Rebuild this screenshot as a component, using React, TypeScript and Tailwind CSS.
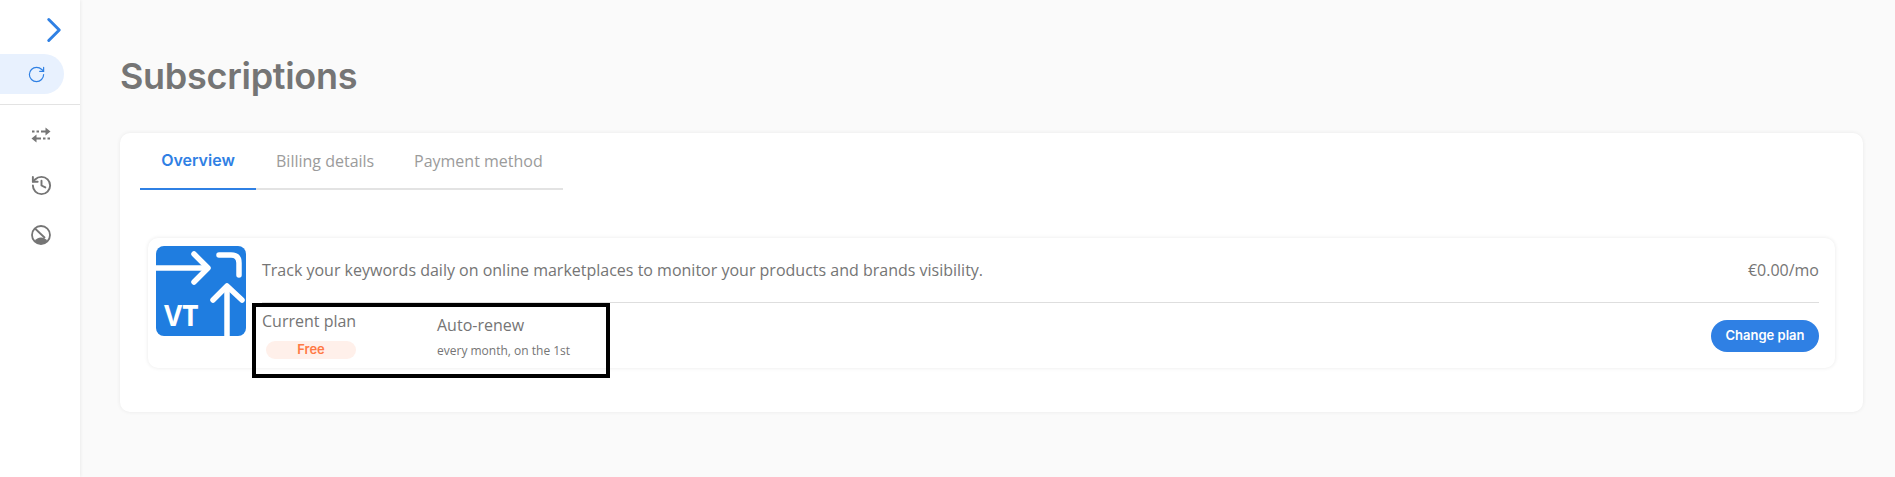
import { ChevronRight, RotateCw, History } from 'lucide-react';

function SwapIcon() {
  return (
    <svg width="20" height="16" viewBox="0 0 20 16" fill="none" className="text-[#757575]">
      <path d="M1 4.500h2.500M5.500 4.500H8M10 4.500h5" stroke="currentColor" strokeWidth="1.800" />
      <path d="M14.500 0.500l5 4-5 4z" fill="currentColor" />
      <path d="M19 11.500h-2.500M14.500 11.500H12M10 11.500H5" stroke="currentColor" strokeWidth="1.800" />
      <path d="M5.500 7.500l-5 4 5 4z" fill="currentColor" />
    </svg>
  );
}

function GaugeOffIcon() {
  return (
    <svg width="20" height="20" viewBox="0 0 20 20" fill="none" className="text-[#757575]">
      <path d="M3.500 16.200C5 13.800 7.400 12.600 10 12.600s5 1.200 6.500 3.600A9 9 0 0 1 3.500 16.200z" fill="currentColor" />
      <circle cx="10" cy="10" r="9" stroke="currentColor" strokeWidth="1.800" />
      <path d="M4 3.500L14 13" stroke="currentColor" strokeWidth="1.800" />
    </svg>
  );
}

function VtLogo() {
  return (
    <div className="relative w-[90px] h-[90px] shrink-0 rounded-[8px] bg-[#1f7de0] overflow-hidden">
      <svg width="90" height="90" viewBox="0 0 90 90" fill="none" stroke="white" strokeWidth="5.500" strokeLinecap="round" strokeLinejoin="round">
        <path d="M0 22H50" strokeLinecap="butt" />
        <path d="M38 8L52 22L38 36" />
        <path d="M63 9H75Q83 9 83 17V29" />
        <path d="M57 54L71 40L86 54" />
        <path d="M71 41V90" strokeLinecap="butt" />
      </svg>
      <span className="absolute left-[8px] top-[53px] text-[28px] leading-[32px] font-bold text-white font-['Open_Sans',sans-serif]">VT</span>
    </div>
  );
}

export default function App() {
  return (
    <div className="flex h-[477px] bg-[#fafafa] font-['Open_Sans',sans-serif] overflow-hidden">
      {/* Sidebar */}
      <aside className="w-[80px] shrink-0 bg-white shadow-[1px_0_3px_rgba(0,0,0,0.06)]">
        <div className="h-[54px] flex justify-end items-start pt-[9px] pr-[5px]">
          <ChevronRight className="w-[42px] h-[42px] text-[#2f80e4]" strokeWidth={1.700} />
        </div>
        <div className="h-[40px] w-[64px] bg-[#e8f1fe] rounded-r-[20px] flex items-center justify-end pr-[18px]">
          <RotateCw className="w-[19px] h-[19px] text-[#2f80e4]" strokeWidth={1.500} />
        </div>
        <div className="mt-[10px] border-t border-[#e3e3e3]" />
        <div className="flex flex-col items-center gap-[30px] pt-[20px] pl-[2px]">
          <div className="h-[20px] flex items-center"><SwapIcon /></div>
          <div className="h-[20px] flex items-center"><History className="w-[23px] h-[23px] text-[#757575]" strokeWidth={2} /></div>
          <div className="h-[20px] flex items-center"><GaugeOffIcon /></div>
        </div>
      </aside>

      {/* Main */}
      <main className="flex-1 pl-[40px] pr-[32px] pt-[50px]">
        <h1 className="text-[36px] leading-[52px] font-semibold text-[#757575] font-['Inter',sans-serif] tracking-[-0.3px]">Subscriptions</h1>
        <div className="mt-[31px] h-[279px] bg-white rounded-[10px] shadow-[0_0_4px_rgba(0,0,0,0.07)] px-[20px] pt-[7px]">
          {/* Tabs */}
          <div className="flex w-[423px] h-[50px] border-b-2 border-[#e3e3e3] text-[16px]">
            <div className="w-[116px] h-[50px] pb-[8px] border-b-2 border-[#2f80e4] flex items-center justify-center font-semibold text-[#2f80e4] font-['Inter',sans-serif]">Overview</div>
            <div className="pl-[20px] w-[158px] h-[48px] pb-[7px] flex items-center text-[#9b9b9b]">Billing details</div>
            <div className="w-[130px] h-[48px] pb-[7px] flex items-center text-[#9b9b9b]">Payment method</div>
          </div>

          {/* Plan card */}
          <div className="mt-[48px] mx-[8px] h-[130px] bg-white rounded-[10px] shadow-[0_0_4px_rgba(0,0,0,0.09)] flex pl-[8px] pr-[16px] pt-[8px] gap-[16px]">
            <VtLogo />
            <div className="flex-1">
              <div className="h-[57px] pb-[9px] flex items-center justify-between border-b border-[#dedede] text-[16px] text-[#757575]">
                <span>Track your keywords daily on online marketplaces to monitor your products and brands visibility.</span>
                <span>€0.00/mo</span>
              </div>
              <div className="flex items-start justify-between">
                <div className="flex">
                  <div className="w-[175px]">
                    <div className="text-[16px] leading-[22px] text-[#757575] mt-[7px]">Current plan</div>
                    <div className="mt-[9px] ml-[4px] w-[90px] h-[18px] rounded-full bg-[#fff0ea] flex items-center justify-center text-[13px] font-semibold text-[#ff7a45] font-['Inter',sans-serif]">Free</div>
                  </div>
                  <div>
                    <div className="text-[16px] leading-[22px] text-[#757575] mt-[11px]">Auto-renew</div>
                    <div className="text-[12px] leading-[16px] text-[#757575] mt-[7px]">every month, on the 1st</div>
                  </div>
                </div>
                <button className="mt-[17px] w-[108px] h-[32px] rounded-full bg-[#2f80e4] text-white text-[13px] font-semibold font-['Inter',sans-serif]">Change plan</button>
              </div>
            </div>
          </div>
        </div>
      </main>

      {/* Annotation box */}
      <div className="absolute left-[252px] top-[303px] w-[358px] h-[75px] border-[4px] border-black" />
    </div>
  );
}
